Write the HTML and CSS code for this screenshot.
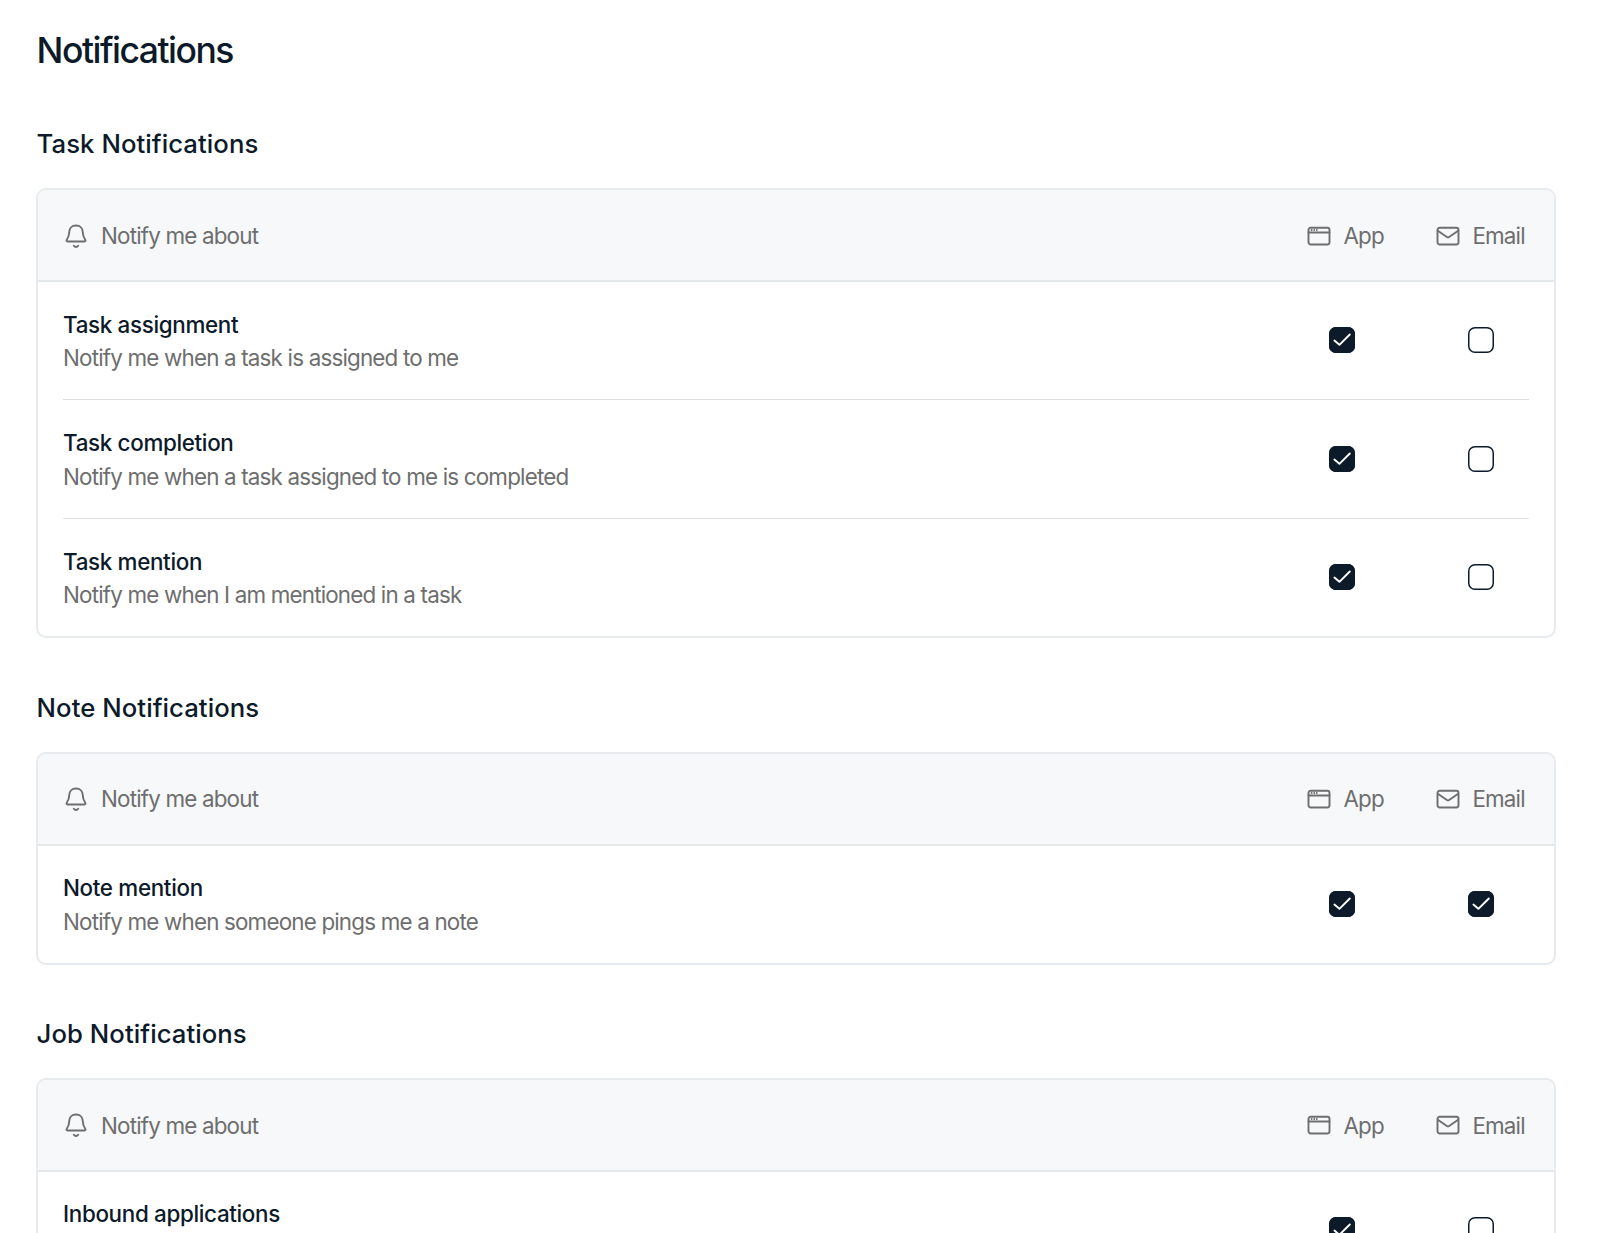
FILE: index.html
```html
<!DOCTYPE html>
<html lang="en">
<head>
<meta charset="utf-8">
<title>Notifications</title>
<link rel="stylesheet" href="styles.css">
</head>
<body>
<svg class="sprite" aria-hidden="true">
  <symbol id="i-bell" viewBox="0 0 24 26"><path d="M12 2.5C7.8 2.5 5.4 5.4 5.3 8.8C5.2 13 4.3 14.6 2.8 16.7C2.1 17.7 2.5 18.5 3.5 18.5H20.5C21.5 18.5 21.9 17.7 21.2 16.7C19.7 14.6 18.8 13 18.7 8.8C18.6 5.4 16.2 2.5 12 2.5ZM9.8 22.8C10.9 24.3 13.1 24.3 14.2 22.8"/></symbol>
  <symbol id="i-app" viewBox="0 0 24 20"><rect x="1.5" y="1.7" width="21" height="16.8" rx="2.2"/><path d="M1.5 6.5H22.5M4.6 4V4.1M7.2 4V4.1M9.8 4V4.1"/></symbol>
  <symbol id="i-mail" viewBox="0 0 24 20"><rect x="1.5" y="1.7" width="21" height="16.8" rx="2.2"/><path d="M1.8 4.8L10.9 11C11.6 11.5 12.4 11.5 13.1 11L22.2 4.8"/></symbol>
  <symbol id="i-check" viewBox="0 0 26 26"><path d="M5.4 13.5L10.4 17.8L20.8 7.5"/></symbol>
</svg>
<main class="page">
  <h1 class="page-title">Notifications</h1>

  <section class="group">
    <h2 class="group-title">Task Notifications</h2>
    <div class="card">
      <div class="card-head">
        <span class="label about"><svg class="bell"><use href="#i-bell"/></svg>Notify me about</span>
        <span class="label app"><svg class="icon"><use href="#i-app"/></svg>App</span>
        <span class="label mail"><svg class="icon"><use href="#i-mail"/></svg>Email</span>
      </div>
      <div class="row">
        <div class="text"><div class="name">Task assignment</div><div class="desc">Notify me when a task is assigned to me</div></div>
        <span class="box on"><svg><use href="#i-check"/></svg></span><span class="box"></span>
      </div>
      <div class="row">
        <div class="text"><div class="name">Task completion</div><div class="desc">Notify me when a task assigned to me is completed</div></div>
        <span class="box on"><svg><use href="#i-check"/></svg></span><span class="box"></span>
      </div>
      <div class="row">
        <div class="text"><div class="name">Task mention</div><div class="desc">Notify me when I am mentioned in a task</div></div>
        <span class="box on"><svg><use href="#i-check"/></svg></span><span class="box"></span>
      </div>
    </div>
  </section>

  <section class="group">
    <h2 class="group-title">Note Notifications</h2>
    <div class="card">
      <div class="card-head">
        <span class="label about"><svg class="bell"><use href="#i-bell"/></svg>Notify me about</span>
        <span class="label app"><svg class="icon"><use href="#i-app"/></svg>App</span>
        <span class="label mail"><svg class="icon"><use href="#i-mail"/></svg>Email</span>
      </div>
      <div class="row">
        <div class="text"><div class="name">Note mention</div><div class="desc">Notify me when someone pings me a note</div></div>
        <span class="box on"><svg><use href="#i-check"/></svg></span><span class="box on"><svg><use href="#i-check"/></svg></span>
      </div>
    </div>
  </section>

  <section class="group">
    <h2 class="group-title">Job Notifications</h2>
    <div class="card">
      <div class="card-head">
        <span class="label about"><svg class="bell"><use href="#i-bell"/></svg>Notify me about</span>
        <span class="label app"><svg class="icon"><use href="#i-app"/></svg>App</span>
        <span class="label mail"><svg class="icon"><use href="#i-mail"/></svg>Email</span>
      </div>
      <div class="row">
        <div class="text"><div class="name">Inbound applications</div><div class="desc">&nbsp;</div></div>
        <span class="box on"><svg><use href="#i-check"/></svg></span><span class="box"></span>
      </div>
    </div>
  </section>
</main>
</body>
</html>
```
FILE: styles.css
```css
* { box-sizing: border-box; }

html, body { height: 100%; }

body {
  margin: 0;
  overflow: hidden;
  background: #fff;
  color: #0c1a2a;
  font-family: Inter, "Liberation Sans", sans-serif;
}

.sprite { position: absolute; width: 0; height: 0; }

svg {
  flex: none;
  fill: none;
  stroke: currentColor;
  stroke-width: 1.9;
  stroke-linecap: round;
  stroke-linejoin: round;
}

.page {
  height: 100%;
  overflow: hidden;
  padding: 27px 44px 0 36px;
}

.page-title {
  margin: 0;
  padding-left: 0.6px;
  font-size: 35.5px;
  line-height: 48px;
  font-weight: 500;
  letter-spacing: -1.5px;
}

.group { padding-top: 50.2px; }
.group + .group { padding-top: 50.4px; }

.group-title {
  margin: 0 0 24.9px;
  padding-left: 0.6px;
  font-size: 25.7px;
  line-height: 38px;
  font-weight: 500;
  letter-spacing: 0.06px;
}

.card {
  overflow: hidden;
  border: 2px solid #e7ebed;
  border-radius: 10px;
}

.card-head {
  display: flex;
  align-items: center;
  height: 92px;
  padding: 1px 29.2px 0 26px;
  border-bottom: 2px solid #e5e8ea;
  background: #f7f8fa;
}

.label {
  display: flex;
  align-items: center;
  color: #6e6e6e;
  font-size: 22.4px;
  line-height: 33.5px;
  letter-spacing: -0.82px;
}

.about { flex: 1; gap: 13px; }
.app, .mail { gap: 12.6px; }
.mail { margin-left: 52px; }
.bell { width: 24px; height: 26px; }
.icon { width: 24px; height: 20px; }

.row {
  display: flex;
  align-items: center;
  height: 117px;
  margin: 0 25px;
  padding-bottom: 1px;
}
.row + .row {
  height: 118.6px;
  padding-bottom: 0;
  border-top: 1px solid #dcdfe1;
}

.text { flex: 1; padding-top: 2px; }

.name, .desc {
  font-size: 22.4px;
  line-height: 33.5px;
  letter-spacing: -0.82px;
}
.name { font-weight: 500; letter-spacing: -0.33px; }
.desc { color: #6e6e6e; }

.box {
  width: 26px;
  height: 26px;
  margin-right: 35px;
  border-radius: 7px;
  box-shadow: inset 0 0 0 1.5px #0c1a2a;
}
.box.on { display: flex; margin-right: 113px; background: #0c1a2a; color: #fff; }
.box.on:last-child { margin-right: 35px; }
.box svg { width: 26px; height: 26px; }
```
